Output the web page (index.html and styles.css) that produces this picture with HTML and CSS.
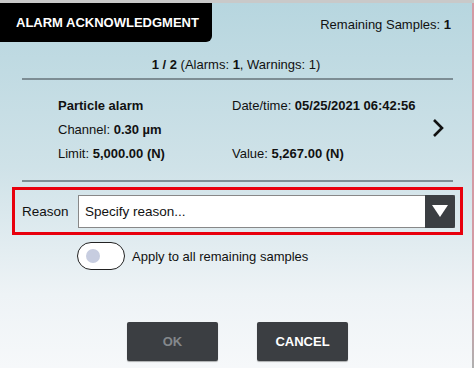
FILE: index.html
```html
<!DOCTYPE html>
<html lang="en">
<head>
    <meta charset="UTF-8">
    <meta name="viewport" content="width=device-width, initial-scale=1.0">
    <title>Alarm acknowledgment</title>
    <link rel="stylesheet" href="styles.css">
</head>
<body>
    <div class="top-strip"></div>
    <div class="screen">
        <div class="dialog">
            <div class="header">
                <div class="tab">ALARM ACKNOWLEDGMENT</div>
                <div class="remaining">Remaining Samples: <b>1</b></div>
            </div>
            <div class="counter"><b>1 / 2</b> (Alarms: <b>1</b>, Warnings: 1)</div>
            <div class="rule"></div>
            <div class="alarm">
                <div class="alarm-grid">
                    <div class="cell"><b>Particle alarm</b></div>
                    <div class="cell">Date/time: <b>05/25/2021 06:42:56</b></div>
                    <div class="cell">Channel: <b>0.30 µm</b></div>
                    <div class="cell"></div>
                    <div class="cell">Limit: <b>5,000.00 (N)</b></div>
                    <div class="cell">Value: <b>5,267.00 (N)</b></div>
                </div>
                <svg class="next" width="14" height="20" viewBox="0 0 14 20">
                    <path d="M3 2 L11 10 L3 18" fill="none" stroke="#111" stroke-width="2.6"/>
                </svg>
            </div>
            <div class="rule"></div>
            <div class="reason-box">
                <span class="reason-label">Reason</span>
                <div class="select">
                    <span class="select-text">Specify reason...</span>
                    <span class="select-btn">
                        <svg width="18" height="14" viewBox="0 0 18 14">
                            <path d="M1 1 L17 1 L9 13 Z" fill="#fff"/>
                        </svg>
                    </span>
                </div>
            </div>
            <div class="apply">
                <span class="toggle"><span class="knob"></span></span>
                <span>Apply to all remaining samples</span>
            </div>
            <div class="buttons">
                <button class="btn disabled">OK</button>
                <button class="btn">CANCEL</button>
            </div>
        </div>
        <div class="side-strip"></div>
    </div>
</body>
</html>
```

FILE: styles.css
```css
body {
    margin: 0;
    font-family: "Liberation Sans", Arial, sans-serif;
    font-size: 13px;
    color: #111;
    background-color: #fff;
}
.top-strip {
    height: 3px;
    background-color: #c9c9c9;
}
.screen {
    display: flex;
}
.dialog {
    width: 472px;
    height: 365px;
    background: linear-gradient(to bottom, #b7d6df 0%, #cfe2e8 45%, #eef3f6 80%, #f6f8fa 100%);
}
.side-strip {
    width: 2px;
    background: linear-gradient(to bottom, #d49aa4 0%, #d49aa4 80%, #b0b0b0 100%);
}
.header {
    display: flex;
    justify-content: space-between;
    height: 39px;
}
.tab {
    width: 196px;
    padding-left: 16px;
    background-color: #000;
    color: #fff;
    font-weight: bold;
    font-size: 13px;
    line-height: 39px;
    border-bottom-right-radius: 6px;
}
.remaining {
    padding: 14px 21px 0 0;
}
.counter {
    text-align: center;
    margin-top: 15px;
    height: 21px;
}
.rule {
    height: 2px;
    margin: 0 19px 0 22px;
    background-color: #7d8d94;
}
.alarm {
    display: flex;
    align-items: center;
    height: 100px;
    padding-left: 58px;
    padding-right: 27px;
}
.alarm-grid {
    display: grid;
    grid-template-columns: 174px 1fr;
    row-gap: 9px;
    flex: 1;
    margin-top: -2px;
}
.cell {
    height: 15px;
}
.next {
    margin-top: -4px;
}
.reason-box {
    display: flex;
    align-items: center;
    margin: 5px 9px 0 12px;
    height: 42px;
    padding: 0 5px 0 7px;
    border: 3px solid #e8000d;
}
.reason-label {
    width: 56px;
    font-size: 13.5px;
}
.select {
    flex: 1;
    display: flex;
    height: 33px;
    background-color: #fff;
    border: 1px solid #888;
    box-sizing: border-box;
}
.select-text {
    flex: 1;
    padding-left: 6px;
    line-height: 31px;
    font-size: 13.5px;
}
.select-btn {
    width: 30px;
    margin: -1px -1px -1px 0;
    background-color: #3b3e42;
    border-radius: 0 2px 2px 0;
    display: flex;
    align-items: center;
    justify-content: center;
}
.apply {
    display: flex;
    align-items: center;
    gap: 7px;
    margin: 7px 0 0 77px;
}
.toggle {
    width: 46px;
    height: 26px;
    border: 1px solid #222;
    border-radius: 14px;
    background-color: #fff;
    display: flex;
    align-items: center;
}
.knob {
    width: 14px;
    height: 14px;
    margin-left: 8px;
    border-radius: 50%;
    background-color: #c7cde0;
}
.buttons {
    display: flex;
    gap: 39px;
    margin: 52px 0 0 127px;
}
.btn {
    width: 91px;
    height: 39px;
    border: none;
    border-radius: 2px;
    background-color: #3b3e42;
    color: #fff;
    font-family: "Liberation Sans", Arial, sans-serif;
    font-weight: bold;
    font-size: 13px;
    box-shadow: 0 1px 1px rgba(0, 0, 0, 0.3);
}
.btn.disabled {
    color: #84888c;
}
```
